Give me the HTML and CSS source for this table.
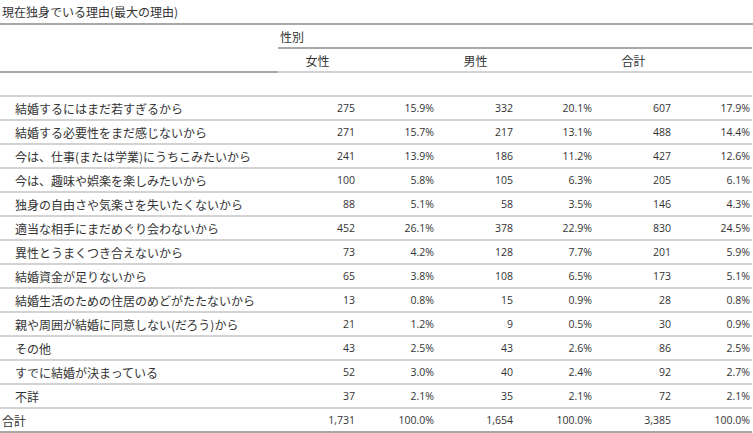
FILE: index.html
```html
<!DOCTYPE html>
<html lang="ja">
<head>
<meta charset="utf-8">
<link rel="stylesheet" href="styles.css">
</head>
<body>
<div class="title">現在独身でいる理由(最大の理由)</div>
<table class="tbl">
  <colgroup>
    <col class="c-stub"><col class="c-num"><col class="c-num"><col class="c-num"><col class="c-num"><col class="c-num"><col class="c-num">
  </colgroup>
  <thead>
    <tr class="spanner">
      <th class="stubhead" rowspan="2"></th>
      <th class="span-label" colspan="6">性別</th>
    </tr>
    <tr class="colheads">
      <th>女性</th><th></th><th>男性</th><th></th><th>合計</th><th></th>
    </tr>
  </thead>
  <tbody>
    <tr class="group"><td colspan="7"></td></tr>
    <tr><td class="lbl">結婚するにはまだ若すぎるから</td><td class="n">275</td><td class="n">15.9%</td><td class="n">332</td><td class="n">20.1%</td><td class="n">607</td><td class="n">17.9%</td></tr>
    <tr><td class="lbl">結婚する必要性をまだ感じないから</td><td class="n">271</td><td class="n">15.7%</td><td class="n">217</td><td class="n">13.1%</td><td class="n">488</td><td class="n">14.4%</td></tr>
    <tr><td class="lbl">今は、仕事(または学業)にうちこみたいから</td><td class="n">241</td><td class="n">13.9%</td><td class="n">186</td><td class="n">11.2%</td><td class="n">427</td><td class="n">12.6%</td></tr>
    <tr><td class="lbl">今は、趣味や娯楽を楽しみたいから</td><td class="n">100</td><td class="n">5.8%</td><td class="n">105</td><td class="n">6.3%</td><td class="n">205</td><td class="n">6.1%</td></tr>
    <tr><td class="lbl">独身の自由さや気楽さを失いたくないから</td><td class="n">88</td><td class="n">5.1%</td><td class="n">58</td><td class="n">3.5%</td><td class="n">146</td><td class="n">4.3%</td></tr>
    <tr><td class="lbl">適当な相手にまだめぐり会わないから</td><td class="n">452</td><td class="n">26.1%</td><td class="n">378</td><td class="n">22.9%</td><td class="n">830</td><td class="n">24.5%</td></tr>
    <tr><td class="lbl">異性とうまくつき合えないから</td><td class="n">73</td><td class="n">4.2%</td><td class="n">128</td><td class="n">7.7%</td><td class="n">201</td><td class="n">5.9%</td></tr>
    <tr><td class="lbl">結婚資金が足りないから</td><td class="n">65</td><td class="n">3.8%</td><td class="n">108</td><td class="n">6.5%</td><td class="n">173</td><td class="n">5.1%</td></tr>
    <tr><td class="lbl">結婚生活のための住居のめどがたたないから</td><td class="n">13</td><td class="n">0.8%</td><td class="n">15</td><td class="n">0.9%</td><td class="n">28</td><td class="n">0.8%</td></tr>
    <tr><td class="lbl">親や周囲が結婚に同意しない(だろう)から</td><td class="n">21</td><td class="n">1.2%</td><td class="n">9</td><td class="n">0.5%</td><td class="n">30</td><td class="n">0.9%</td></tr>
    <tr><td class="lbl">その他</td><td class="n">43</td><td class="n">2.5%</td><td class="n">43</td><td class="n">2.6%</td><td class="n">86</td><td class="n">2.5%</td></tr>
    <tr><td class="lbl">すでに結婚が決まっている</td><td class="n">52</td><td class="n">3.0%</td><td class="n">40</td><td class="n">2.4%</td><td class="n">92</td><td class="n">2.7%</td></tr>
    <tr><td class="lbl">不詳</td><td class="n">37</td><td class="n">2.1%</td><td class="n">35</td><td class="n">2.1%</td><td class="n">72</td><td class="n">2.1%</td></tr>
    <tr class="total"><td class="lbl">合計</td><td class="n">1,731</td><td class="n">100.0%</td><td class="n">1,654</td><td class="n">100.0%</td><td class="n">3,385</td><td class="n">100.0%</td></tr>
  </tbody>
</table>
</body>
</html>
```

FILE: styles.css
```css
html, body {
  margin: 0;
  padding: 0;
  background: #ffffff;
}

body {
  width: 753px;
  color: #333333;
  font-family: "Noto Sans CJK JP", "Noto Sans", sans-serif;
  font-size: 12px;
}

.title {
  height: 23px;
  line-height: 23px;
  padding-left: 2px;
  border-bottom: 2px solid #a8a8a8;
  white-space: nowrap;
}

.tbl {
  border-collapse: separate;
  border-spacing: 0;
  table-layout: fixed;
  width: 752px;
}

.c-stub { width: 278px; }
.c-num { width: 79px; }

.tbl th,
.tbl td {
  padding: 0;
  height: 22px;
  font-weight: normal;
  white-space: nowrap;
  vertical-align: middle;
}

.tbl th.span-label {
  text-align: left;
  padding-left: 2px;
  border-bottom: 2px solid #a8a8a8;
}

.tbl th.stubhead {
  border-bottom: 2px solid #a8a8a8;
}

.tbl .colheads th {
  text-align: center;
  border-bottom: 2px solid #d3d3d3;
}

.tbl tbody td {
  border-bottom: 2px solid #d3d3d3;
}

.tbl td.lbl {
  padding-left: 15px;
}

.tbl td.n {
  text-align: right;
  padding-right: 2px;
  font-family: "Open Sans", "Noto Sans", sans-serif;
  font-size: 10.5px;
}

.tbl tbody tr.total td {
  border-bottom: 2px solid #a8a8a8;
}

.tbl tr.total td.lbl {
  padding-left: 2px;
}
```
